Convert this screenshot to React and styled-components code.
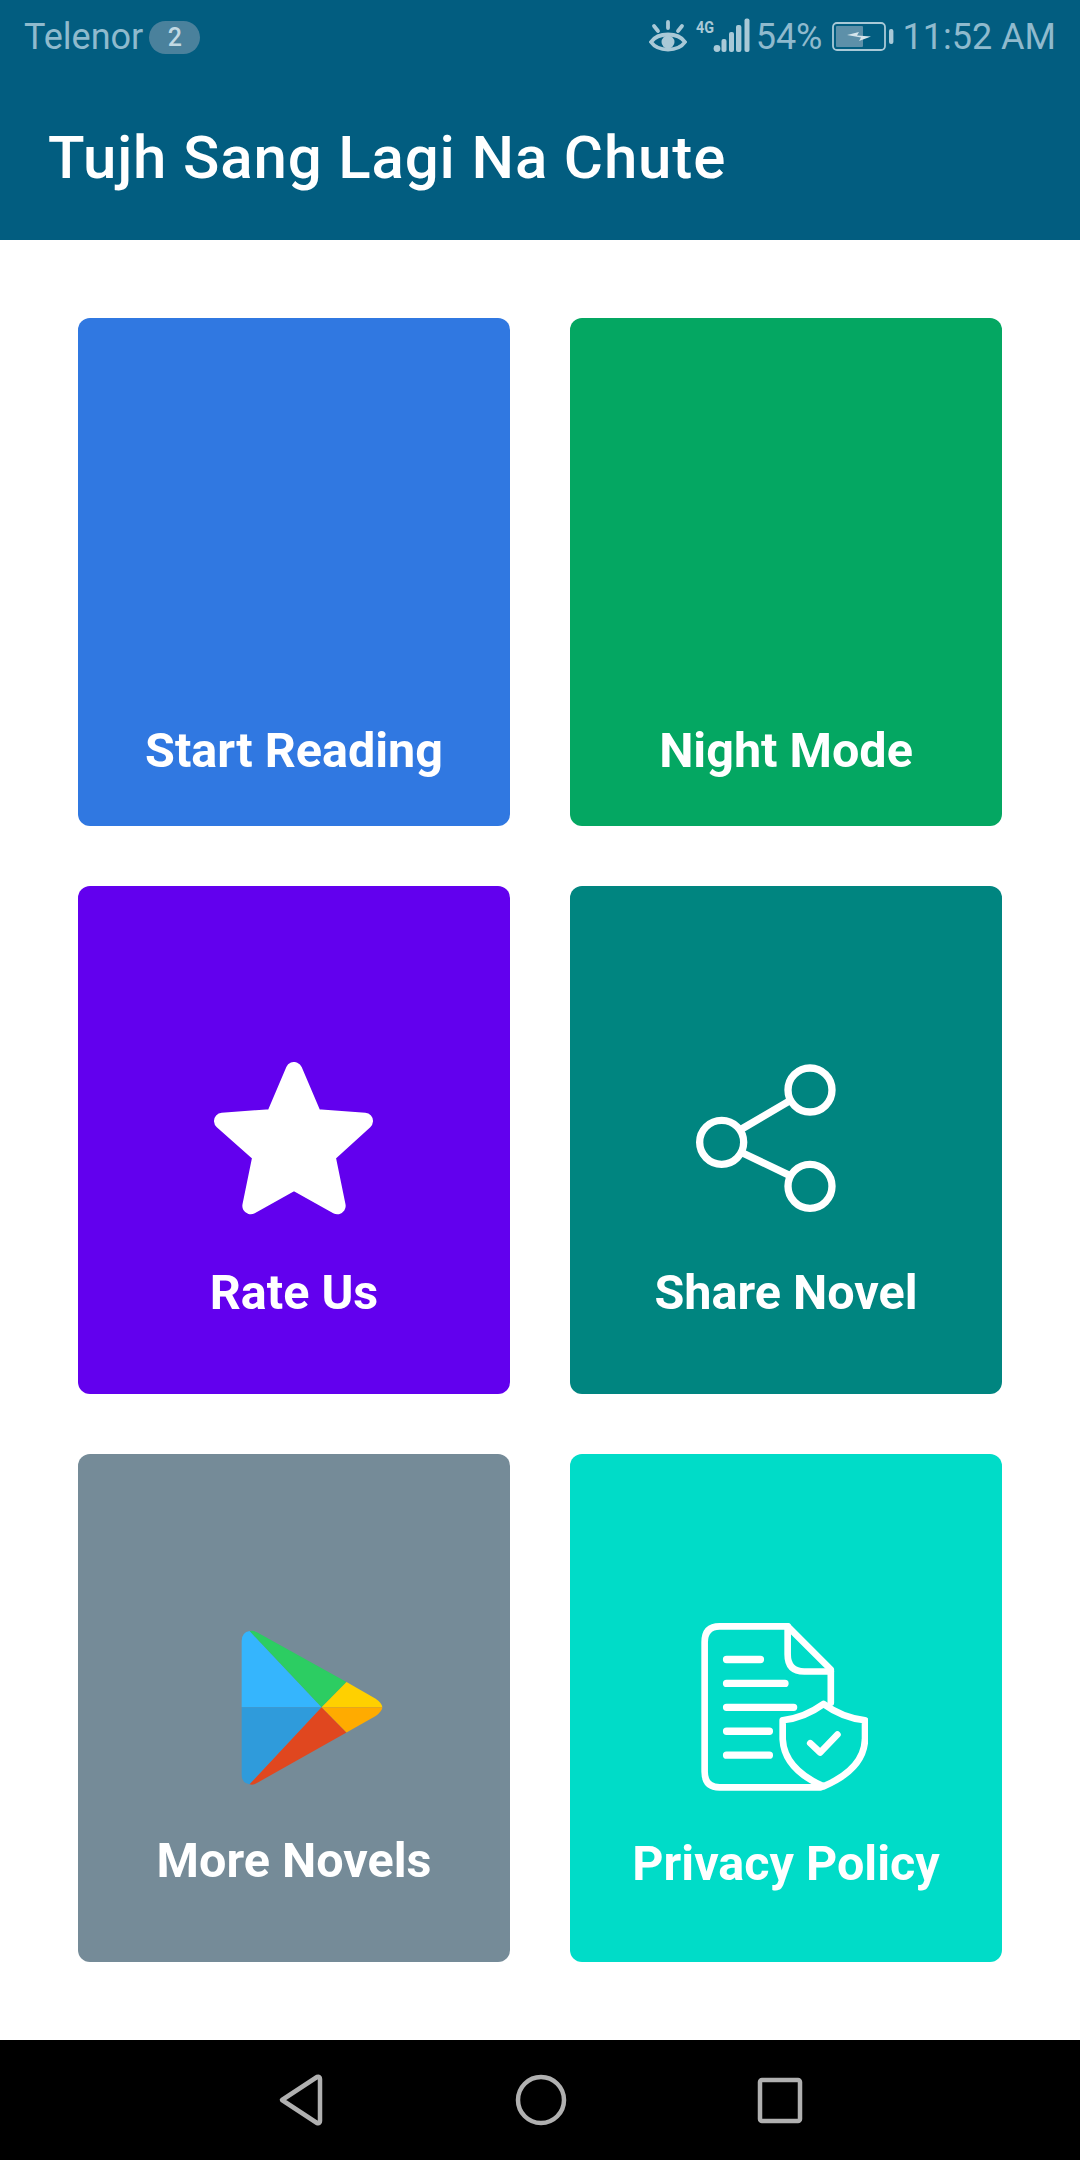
import React from "react";
import styled, { createGlobalStyle } from "styled-components";

const Global = createGlobalStyle`
  html, body { margin: 0; padding: 0; background: #fff; }
  body { font-family: Roboto, "Liberation Sans", sans-serif; }
`;

const Page = styled.div`
  width: 1080px;
  height: 2160px;
  display: flex;
  flex-direction: column;
  overflow: hidden;
`;

const Header = styled.header`
  height: 240px;
  flex: none;
  background: #025d80;
  display: flex;
  flex-direction: column;
`;

const StatusBar = styled.div`
  height: 72px;
  box-sizing: border-box;
  padding: 2px 24px 0 24px;
  display: flex;
  align-items: center;
  justify-content: space-between;
  color: #8fbacd;
  font-size: 36px;
  line-height: 70px;
`;

const StatusGroup = styled.div`
  display: flex;
  align-items: center;
`;

const Badge = styled.span`
  width: 51px;
  height: 33px;
  margin-left: 6px;
  border-radius: 17px;
  background: #4a819c;
  color: #c2d9e3;
  font-size: 25px;
  font-weight: 500;
  line-height: 33px;
  text-align: center;
`;

const StatusText = styled.span`
  margin-left: ${(p) => p.$gap || 0}px;
`;

const Title = styled.h1`
  margin: 0;
  height: 168px;
  box-sizing: border-box;
  padding: 3px 0 0 48px;
  display: flex;
  align-items: center;
  color: #fff;
  font-size: 60px;
  font-weight: 500;
  letter-spacing: 0.85px;
`;

const Grid = styled.main`
  flex: 1;
  box-sizing: border-box;
  padding: 78px;
  display: grid;
  grid-template-columns: 432px 432px;
  grid-template-rows: 508px 508px 508px;
  gap: 60px;
`;

const Card = styled.button`
  border: 0;
  margin: 0;
  padding: 0 0 ${(p) => p.$bottom}px;
  border-radius: 12px;
  background: ${(p) => p.$bg};
  display: flex;
  flex-direction: column;
  align-items: center;
  justify-content: flex-end;
  font-family: inherit;
`;

const Label = styled.span`
  color: #fff;
  font-size: 48.5px;
  font-weight: 700;
  line-height: 60px;
  text-align: center;
`;

const IconSlot = styled.svg`
  display: block;
  flex: none;
  margin: 0 0 ${(p) => p.$gap}px ${(p) => p.$shift || 0}px;
  filter: blur(0.6px);
`;

const StatusIcon = styled.svg`
  display: block;
  flex: none;
  margin-left: ${(p) => p.$left || 0}px;
`;

const NavBar = styled.nav`
  height: 120px;
  flex: none;
  background: #000;
  display: flex;
  align-items: center;
  justify-content: center;
`;

const NavIcon = styled.svg`
  display: block;
  flex: none;
  margin-left: ${(p) => p.$left || 0}px;
`;

const EyeIcon = () => (
  <StatusIcon width="38" height="34" viewBox="0 0 38 34" fill="none" stroke="#a9c9d7" strokeWidth="3.8" strokeLinecap="round">
    <path d="M2 22 C 9 12, 29 12, 36 22 C 29 32, 9 32, 2 22 Z" />
    <circle cx="19" cy="22" r="6.5" fill="#a9c9d7" stroke="none" />
    <path d="M19 2 V8 M5 6 L9 11 M33 6 L29 11" />
  </StatusIcon>
);

const SignalIcon = () => (
  <StatusIcon $left={8} width="56" height="40" viewBox="0 0 56 40">
    <text x="1" y="15.5" fontFamily="Roboto, sans-serif" fontWeight="700" fontSize="16.5" fill="#a9c9d7" textLength="18" lengthAdjust="spacingAndGlyphs">4G</text>
    <g fill="#a9c9d7">
      <circle cx="22" cy="31.5" r="3.4" />
      <rect x="26.5" y="22" width="5" height="13" rx="2" />
      <rect x="34" y="15" width="5" height="20" rx="2" />
      <rect x="41" y="8" width="5.4" height="27" rx="2" />
      <rect x="49.5" y="1.5" width="5" height="33.5" rx="2" />
    </g>
  </StatusIcon>
);

const BatteryIcon = () => (
  <StatusIcon $left={9} width="62" height="30" viewBox="0 0 62 30">
    <rect x="1" y="1" width="52" height="27" rx="4" fill="none" stroke="#a9c9d7" strokeWidth="1.8" />
    <rect x="4" y="4" width="27" height="21" rx="1" fill="#5d90a9" />
    <path d="M15 13 L27 10 L25 13.5 L39 14.5 L27 19 L29 15.5 Z" fill="#d5e5ec" />
    <rect x="57" y="7" width="4.4" height="15" rx="2" fill="#a9c9d7" />
  </StatusIcon>
);

const StarIcon = () => (
  <IconSlot $gap={47} width="160" height="154" viewBox="75 68 480 462">
    <path
      d="M315 93 L375 234 L527 245 L414 348 L445 500 L315 427 L185 500 L216 348 L100 245 L255 234 Z"
      fill="#fff"
      stroke="#fff"
      strokeWidth="50"
      strokeLinejoin="round"
    />
  </IconSlot>
);

const ShareIcon = () => (
  <IconSlot $gap={50} $shift={-40} width="140" height="150" viewBox="78 72 420 450" fill="none" stroke="#fff" strokeWidth="22">
    <circle cx="420" cy="153" r="66" />
    <circle cx="155" cy="310" r="66" />
    <circle cx="420" cy="442" r="66" />
    <path d="M215 270 L360 185 M218 342 L360 410" />
  </IconSlot>
);

const PlayIcon = () => (
  <IconSlot $gap={45} $shift={36} width="142" height="156" viewBox="64 60 428 468">
    <path d="M90 62 Q66 66 66 92 L66 292 L307 292 Z" fill="#35b5fd" />
    <path d="M66 292 L66 496 Q66 520 90 524 L307 292 Z" fill="#2f9bdb" />
    <path d="M90 62 Q100 60 112 66 L382 216 L307 292 Z" fill="#2ccd62" />
    <path d="M90 524 Q100 528 112 520 L382 368 L307 292 Z" fill="#e0471f" />
    <path d="M382 216 L470 266 Q490 280 490 292 L307 292 Z" fill="#ffd000" />
    <path d="M382 368 L470 318 Q490 304 490 292 L307 292 Z" fill="#ffab00" />
  </IconSlot>
);

const PolicyIcon = () => (
  <IconSlot $gap={42} $shift={-4} width="168" height="170" viewBox="36 38 506 510" fill="none" stroke="#fff" strokeWidth="20" strokeLinecap="round" strokeLinejoin="round">
    <path d="M400 535 L95 535 Q50 535 50 488 L50 98 Q50 50 95 50 L300 50 L430 180 L430 280" />
    <path d="M300 50 L300 135 Q300 186 350 186 L430 186" />
    <path d="M116 150 H218 M116 222 H292 M116 294 H318 M116 366 H245 M116 438 H245" strokeWidth="22" />
    <path d="M408 284 Q350 326 285 333 L285 390 Q290 480 408 532 Q530 480 533 390 L533 333 Q466 326 408 284 Z" />
    <path d="M368 402 L398 430 L450 376" strokeWidth="20" />
  </IconSlot>
);

const cards = [
  { label: "Start Reading", bg: "#3078e1", bottom: 45 },
  { label: "Night Mode", bg: "#04a762", bottom: 45 },
  { label: "Rate Us", bg: "#6200ee", bottom: 71, icon: <StarIcon /> },
  { label: "Share Novel", bg: "#008580", bottom: 71, icon: <ShareIcon /> },
  { label: "More Novels", bg: "#758b98", bottom: 71, icon: <PlayIcon /> },
  { label: "Privacy Policy", bg: "#00dcc8", bottom: 68, icon: <PolicyIcon /> },
];

export default function App() {
  return (
    <Page>
      <Global />
      <Header>
        <StatusBar>
          <StatusGroup>
            <StatusText>Telenor</StatusText>
            <Badge>2</Badge>
          </StatusGroup>
          <StatusGroup>
            <EyeIcon />
            <SignalIcon />
            <StatusText $gap={5}>54%</StatusText>
            <BatteryIcon />
            <StatusText $gap={9}>11:52 AM</StatusText>
          </StatusGroup>
        </StatusBar>
        <Title>Tujh Sang Lagi Na Chute</Title>
      </Header>
      <Grid>
        {cards.map((c) => (
          <Card key={c.label} $bg={c.bg} $bottom={c.bottom}>
            {c.icon}
            <Label>{c.label}</Label>
          </Card>
        ))}
      </Grid>
      <NavBar>
        <NavIcon width="48" height="54" viewBox="0 0 48 54" fill="none" stroke="#b0b0b0" strokeWidth="4.5" strokeLinejoin="round">
          <path d="M40 4 L5 27 L40 50 Q43 51 43 48 L43 6 Q43 3 40 4 Z" />
        </NavIcon>
        <NavIcon $left={189} width="54" height="54" viewBox="0 0 54 54" fill="none" stroke="#b0b0b0" strokeWidth="4.5">
          <circle cx="27" cy="27" r="23" />
        </NavIcon>
        <NavIcon $left={188} width="48" height="54" viewBox="0 0 48 54" fill="none" stroke="#b0b0b0" strokeWidth="4.5">
          <rect x="4" y="7" width="40" height="41" rx="2" />
        </NavIcon>
      </NavBar>
    </Page>
  );
}
